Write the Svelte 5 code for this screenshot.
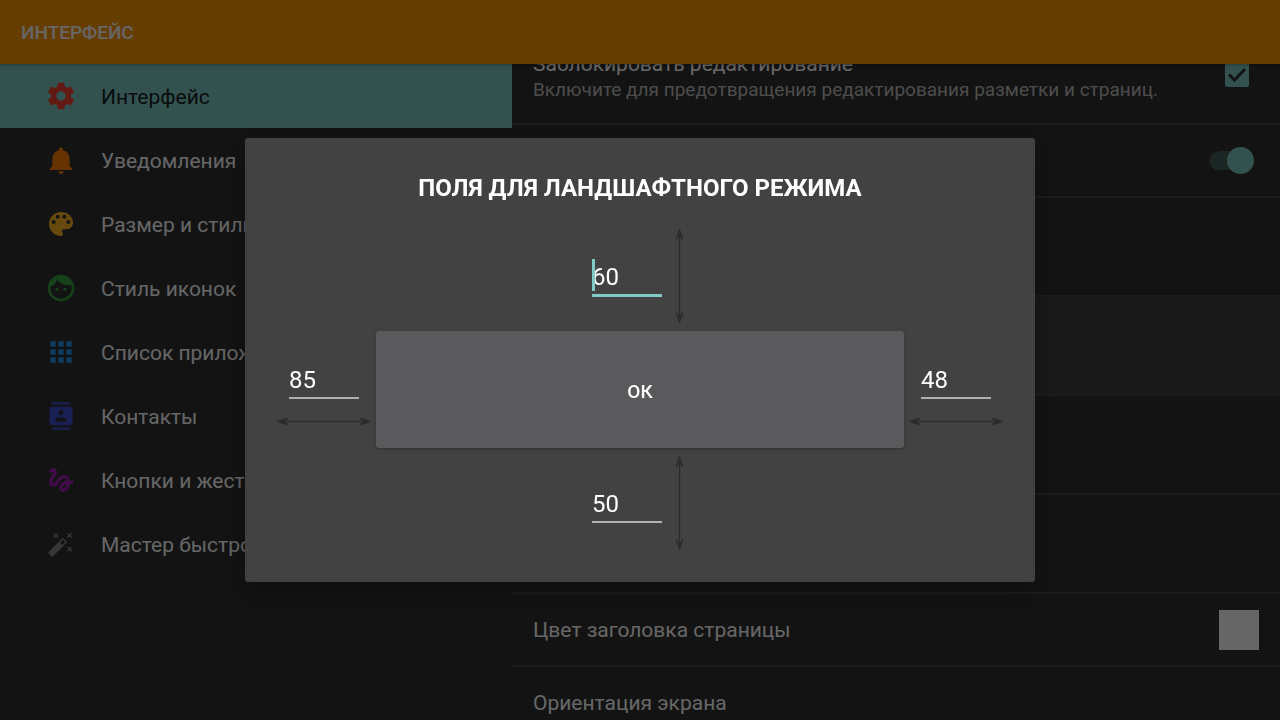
<script>
  const sections = [
    { label: 'Интерфейс', icon: 'settings', color: '#f44336', active: true },
    { label: 'Уведомления', icon: 'bell', color: '#ff8000' },
    { label: 'Размер и стиль', icon: 'palette', color: '#ffb921' },
    { label: 'Стиль иконок', icon: 'face', color: '#3ba33f' },
    { label: 'Список приложений', icon: 'apps', color: '#2196f3' },
    { label: 'Контакты', icon: 'contacts', color: '#3f51d5' },
    { label: 'Кнопки и жесты', icon: 'gesture', color: '#a51fb8' },
    { label: 'Мастер быстрой настройки', icon: 'wand', color: '#8a8a8a' }
  ];

  const icons = {
    settings: {
      box: '0 0 24 24',
      d: 'M19.43 12.98c.04-.32.07-.64.07-.98s-.03-.66-.07-.98l2.11-1.65c.19-.15.24-.42.12-.64l-2-3.46c-.12-.22-.39-.3-.61-.22l-2.49 1c-.52-.4-1.08-.73-1.69-.98l-.38-2.65C14.46 2.18 14.25 2 14 2h-4c-.25 0-.46.18-.49.42l-.38 2.65c-.61.25-1.17.59-1.69.98l-2.49-1c-.23-.09-.49 0-.61.22l-2 3.46c-.13.22-.07.49.12.64l2.11 1.65c-.04.32-.07.65-.07.98s.03.66.07.98l-2.11 1.65c-.19.15-.24.42-.12.64l2 3.46c.12.22.39.3.61.22l2.49-1c.52.4 1.08.73 1.69.98l.38 2.65c.03.24.24.42.49.42h4c.25 0 .46-.18.49-.42l.38-2.65c.61-.25 1.17-.59 1.69-.98l2.49 1c.23.09.49 0 .61-.22l2-3.46c.12-.22.07-.49-.12-.64l-2.11-1.65zM12 15.5c-1.93 0-3.5-1.57-3.5-3.5s1.57-3.5 3.5-3.5 3.5 1.57 3.5 3.5-1.57 3.5-3.5 3.5z'
    },
    bell: {
      box: '-0.5 -0.5 24 24',
      d: 'M11.5 22c1.1 0 2-.9 2-2h-4c0 1.1.9 2 2 2zm6.5-6v-5.5c0-3.07-2.13-5.64-5-6.32V3.5c0-.83-.67-1.5-1.5-1.5S10 2.67 10 3.5v.68c-2.87.68-5 3.25-5 6.32V16l-2 2v1h17v-1l-2-2z'
    },
    palette: {
      box: '0 0 24 24',
      d: 'M12 3c-4.97 0-9 4.03-9 9s4.03 9 9 9c.83 0 1.5-.67 1.5-1.5 0-.39-.15-.74-.39-1.01-.23-.26-.38-.61-.38-.99 0-.83.67-1.5 1.5-1.5H16c2.76 0 5-2.24 5-5 0-4.42-4.03-8-9-8zm-5.5 9c-.83 0-1.5-.67-1.5-1.5S5.67 9 6.5 9 8 9.67 8 10.5 7.33 12 6.5 12zm3-4C8.67 8 8 7.33 8 6.5S8.67 5 9.5 5s1.5.67 1.5 1.5S10.33 8 9.5 8zm5 0c-.83 0-1.5-.67-1.5-1.5S13.67 5 14.5 5s1.5.67 1.5 1.5S15.33 8 14.5 8zm3 4c-.83 0-1.5-.67-1.5-1.5S16.67 9 17.5 9s1.5.67 1.5 1.5-.67 1.5-1.5 1.5z'
    },
    face: {
      box: '0 0 24 24',
      d: 'M9 11.75c-.69 0-1.25.56-1.25 1.25s.56 1.25 1.25 1.25 1.25-.56 1.25-1.25-.56-1.25-1.25-1.25zm6 0c-.69 0-1.25.56-1.25 1.25s.56 1.25 1.25 1.25 1.25-.56 1.25-1.25-.56-1.25-1.25-1.25zM12 2C6.48 2 2 6.48 2 12s4.48 10 10 10 10-4.48 10-10S17.52 2 12 2zm0 18c-4.41 0-8-3.59-8-8 0-.29.02-.58.05-.86 2.36-1.05 4.23-2.98 5.21-5.37C11.07 8.33 14.05 10 17.42 10c.78 0 1.53-.09 2.25-.26.21.71.33 1.47.33 2.26 0 4.41-3.59 8-8 8z'
    },
    apps: {
      box: '0 0 24 24',
      d: 'M4 8h4V4H4v4zm6 12h4v-4h-4v4zm-6 0h4v-4H4v4zm0-6h4v-4H4v4zm6 0h4v-4h-4v4zm6-10v4h4V4h-4zm-6 4h4V4h-4v4zm6 6h4v-4h-4v4zm0 6h4v-4h-4v4z'
    },
    contacts: {
      box: '-2 -2 28 28',
      d: 'M20 0H4v2h16V0zM4 24h16v-2H4v2zM20 4H4c-1.1 0-2 .9-2 2v12c0 1.1.9 2 2 2h16c1.1 0 2-.9 2-2V6c0-1.1-.9-2-2-2zm-8 2.75c1.24 0 2.25 1.01 2.25 2.25s-1.01 2.25-2.25 2.25S9.75 10.24 9.75 9 10.76 6.75 12 6.75zM17 17H7v-1.5c0-1.67 3.33-2.5 5-2.5s5 .83 5 2.5V17z'
    },
    gesture: {
      box: '0 0 24 24',
      d: 'M4.59 6.89c.7-.71 1.4-1.35 1.71-1.22.5.2 0 1.03-.3 1.52-.25.42-2.86 3.89-2.86 6.31 0 1.28.48 2.34 1.34 2.98.75.56 1.74.73 2.64.46 1.07-.31 1.95-1.4 3.06-2.77 1.21-1.49 2.83-3.44 4.08-3.44 1.63 0 1.65 1.01 1.76 1.79-3.78.64-5.38 3.67-5.38 5.37 0 1.7 1.44 3.09 3.21 3.09 1.63 0 4.29-1.33 4.69-6.1H21v-2.5h-2.47c-.15-1.65-1.09-4.2-4.03-4.2-2.25 0-4.18 1.91-4.94 2.84-.58.73-2.06 2.48-2.29 2.72-.25.3-.68.84-1.11.84-.45 0-.72-.83-.36-1.92.35-1.09 1.4-2.86 1.85-3.52.78-1.14 1.3-1.92 1.3-3.28C8.95 3.69 7.31 3 6.44 3 5.12 3 3.97 4 3.72 4.25c-.36.36-.66.66-.88.93l1.75 1.71zm9.29 11.66c-.31 0-.74-.26-.74-.72 0-.6.73-2.2 2.87-2.76-.3 2.69-1.43 3.48-2.13 3.48z'
    },
    wand: {
      box: '-2 -2 28 28',
      d: 'M7.5 5.6L5 7l1.4-2.5L5 2l2.5 1.4L10 2 8.6 4.5 10 7 7.5 5.6M19.5 15.4L22 14l-1.4 2.5L22 19l-2.5-1.4L17 19l1.4-2.5L17 14l2.5 1.4M22 2l-1.4 2.5L22 7l-2.5-1.4L17 7l1.4-2.5L17 2l2.5 1.4L22 2M13.34 12.78l2.44-2.44-2.12-2.12-2.44 2.44 2.12 2.12M14.37 7.29l2.34 2.34c.39.37.39 1.02 0 1.41L5.04 22.71c-.39.39-1.04.39-1.41 0l-2.34-2.34c-.39-.37-.39-1.02 0-1.41L12.96 7.29c.39-.39 1.04-.39 1.41 0z'
    }
  };

  let locked = $state(true);
  let enabled = $state(true);
  let margins = $state({ top: '60', left: '85', right: '48', bottom: '50' });
</script>

{#snippet verticalArrow()}
  <svg class="arrow-v" viewBox="0 0 16 94" aria-hidden="true">
    <path d="M7.500 3V91" />
    <path class="head" d="M4.500 10.500L7.500 2L10.500 10.500M4.500 83.500L7.500 92L10.500 83.500" />
  </svg>
{/snippet}

{#snippet horizontalArrow()}
  <svg class="arrow-h" viewBox="0 0 94 16" aria-hidden="true">
    <path d="M3 8.500H91" />
    <path class="head" d="M10.500 5.500L2 8.500L10.500 11.500M83.500 5.500L92 8.500L83.500 11.500" />
  </svg>
{/snippet}

<div class="page">
  <header><h1>ИНТЕРФЕЙС</h1></header>
  <div class="body">
    <nav>
      {#each sections as s}
        <a href="#{s.icon}" class:active={s.active}>
          <svg viewBox={icons[s.icon].box} style="fill: {s.color}" aria-hidden="true">
            <path fill-rule="evenodd" d={icons[s.icon].d} />
          </svg>
          <span>{s.label}</span>
        </a>
      {/each}
    </nav>
    <main>
      <label class="row tall">
        <span class="text">
          <span class="name">Заблокировать редактирование</span>
          <span class="hint">Включите для предотвращения редактирования разметки и страниц.</span>
        </span>
        <span class="control">
          <input class="check" type="checkbox" bind:checked={locked} />
          <svg class="tick" viewBox="0 0 24 24" aria-hidden="true"><path d="M4 11.500L9.500 17L20 6" /></svg>
        </span>
      </label>
      <div class="row">
        <input class="switch" type="checkbox" role="switch" aria-label="Переключатель" bind:checked={enabled} />
      </div>
      <div class="row tall"></div>
      <div class="row tall raised"></div>
      <div class="row tall"></div>
      <div class="row tall"></div>
      <div class="row">
        <span class="name">Цвет заголовка страницы</span>
        <button class="swatch" type="button" aria-label="Цвет заголовка страницы"></button>
      </div>
      <div class="row">
        <span class="name">Ориентация экрана</span>
      </div>
    </main>
  </div>
</div>

<div class="scrim">
  <form class="dialog" role="dialog" aria-modal="true" aria-labelledby="dialog-title" onsubmit={(e) => e.preventDefault()}>
    <h2 id="dialog-title">ПОЛЯ ДЛЯ ЛАНДШАФТНОГО РЕЖИМА</h2>
    <div class="margins">
      <div class="cell top">
        <span class="field focused">
          <input type="text" inputmode="numeric" aria-label="Сверху" bind:value={margins.top} />
          <span class="caret"></span>
        </span>
        {@render verticalArrow()}
      </div>
      <div class="cell side">
        <span class="field"><input type="text" inputmode="numeric" aria-label="Слева" bind:value={margins.left} /></span>
        {@render horizontalArrow()}
      </div>
      <button class="ok" type="submit">ОК</button>
      <div class="cell side">
        <span class="field"><input type="text" inputmode="numeric" aria-label="Справа" bind:value={margins.right} /></span>
        {@render horizontalArrow()}
      </div>
      <div class="cell bottom">
        <span class="field"><input type="text" inputmode="numeric" aria-label="Снизу" bind:value={margins.bottom} /></span>
        {@render verticalArrow()}
      </div>
    </div>
  </form>
</div>

<style>
  :global(body) {
    background: #303030;
    font-family: Roboto, sans-serif;
    color: #fff;
  }
  * {
    box-sizing: border-box;
  }
  .page {
    display: flex;
    flex-direction: column;
    height: 100vh;
    overflow: hidden;
  }
  header {
    display: flex;
    align-items: center;
    flex: none;
    height: 64px;
    padding: 2px 21px 0;
    background: #ff9800;
    box-shadow: 0 1px 3px rgba(0, 0, 0, 0.3);
    z-index: 1;
  }
  h1 {
    margin: 0;
    font-size: 19px;
    font-weight: 500;
    line-height: 26px;
  }
  .body {
    display: grid;
    grid-template-columns: 2fr 3fr;
    flex: 1;
    min-height: 0;
    overflow: hidden;
  }
  nav a {
    display: flex;
    align-items: center;
    gap: 24px;
    height: 64px;
    padding: 0 45px;
    color: inherit;
    font-size: 21px;
    line-height: 26px;
    text-decoration: none;
    white-space: nowrap;
  }
  nav span {
    padding-top: 2px;
  }
  nav a.active {
    background: #80cbc4;
    color: rgba(0, 0, 0, 0.87);
  }
  nav svg {
    flex: none;
    width: 32px;
    height: 32px;
  }
  /* The list is scrolled so that its first row is partly under the header. */
  main {
    margin-top: -38px;
  }
  .row {
    display: flex;
    align-items: center;
    justify-content: space-between;
    height: 73px;
    padding: 0 21px;
    border-bottom: 2px solid #484848;
  }
  .row.tall {
    height: 99px;
  }
  .row.raised {
    background: #3f3f3f;
  }
  .text {
    display: flex;
    flex-direction: column;
    padding-top: 4px;
  }
  .name {
    font-size: 21px;
    line-height: 26px;
  }
  .hint {
    color: rgba(255, 255, 255, 0.7);
    font-size: 19px;
    line-height: 26px;
  }
  .control {
    display: grid;
    place-items: center;
    width: 44px;
  }
  .check {
    appearance: none;
    grid-area: 1 / 1;
    width: 24px;
    height: 24px;
    margin: 0;
    border: 2px solid #80cbc4;
    border-radius: 2px;
  }
  .check:checked {
    background: #80cbc4;
  }
  .tick {
    grid-area: 1 / 1;
    width: 24px;
    height: 24px;
    fill: none;
    stroke: #303030;
    stroke-width: 3;
    pointer-events: none;
  }
  .check:not(:checked) + .tick {
    visibility: hidden;
  }
  .switch {
    appearance: none;
    display: flex;
    align-items: center;
    width: 45px;
    height: 27px;
    margin: 0 5px 0 auto;
    background: radial-gradient(circle at 10px 14px, #48605e 9px, transparent 10px),
      linear-gradient(#48605e, #48605e) 10px 4px / 24px 19px no-repeat;
  }
  .switch::after {
    content: '';
    width: 27px;
    height: 27px;
    margin-left: auto;
    border-radius: 50%;
    background: #80cbc4;
  }
  .switch:not(:checked)::after {
    margin-left: 0;
    background: #bdbdbd;
  }
  .swatch {
    width: 40px;
    height: 40px;
    padding: 0;
    border: 0;
    background: #fff;
  }
  .scrim {
    position: fixed;
    inset: 0;
    z-index: 2;
    display: grid;
    place-items: center;
    background: rgba(0, 0, 0, 0.6);
  }
  .dialog {
    width: calc(65% - 42px);
    min-width: 480px;
    padding: 33px 32px 32px;
    border-radius: 3px;
    background: #424242;
    box-shadow: 0 8px 24px rgba(0, 0, 0, 0.3);
  }
  h2 {
    margin: 0 0 24px;
    font-size: 24px;
    font-weight: 700;
    line-height: 34px;
    text-align: center;
  }
  .margins {
    display: grid;
    grid-template-columns: 94px 1fr 94px;
    gap: 8px 5px;
  }
  .cell {
    display: flex;
    align-items: center;
    justify-content: center;
  }
  .top,
  .bottom {
    grid-column: 1 / -1;
    gap: 10px;
  }
  .side {
    flex-direction: column;
    gap: 14px;
    padding-top: 9px;
  }
  .field {
    position: relative;
    display: flex;
  }
  .field input {
    width: 70px;
    height: 40px;
    padding: 6px 0 2px;
    border: 0;
    border-bottom: 2px solid #b0b0b0;
    outline: 0;
    background: none;
    color: #fff;
    font: 24px/30px Roboto, sans-serif;
  }
  .field.focused input {
    height: 42px;
    padding: 7px 0 2px;
    border-bottom: 3px solid #80cbc4;
  }
  .caret {
    position: absolute;
    top: 4px;
    left: 0;
    width: 3px;
    height: 32px;
    background: #80cbc4;
  }
  .arrow-v {
    width: 16px;
    height: 94px;
  }
  .arrow-h {
    width: 94px;
    height: 16px;
  }
  .arrow-v path,
  .arrow-h path {
    fill: none;
    stroke: #2c2c2c;
    stroke-width: 1.3;
  }
  .arrow-v .head,
  .arrow-h .head {
    stroke-width: 2;
  }
  .ok {
    min-height: 117px;
    padding: 4px 0 0;
    border: 0;
    border-radius: 3px;
    background: #5a5a5c;
    box-shadow: 0 1px 3px rgba(0, 0, 0, 0.3);
    color: #fff;
    font: 500 19px/26px Roboto, sans-serif;
  }
</style>
